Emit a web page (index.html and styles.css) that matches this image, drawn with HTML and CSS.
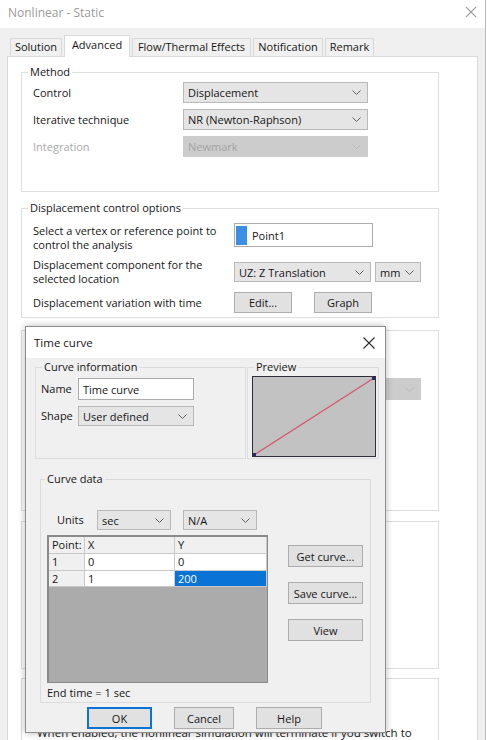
FILE: index.html
```html
<!DOCTYPE html>
<html>
<head>
<meta charset="utf-8">
<link rel="stylesheet" href="styles.css">
</head>
<body>
<div class="window">
  <div class="titlebar">
    <span class="title">Nonlinear - Static</span>
    <svg class="close" width="12" height="12" viewBox="0 0 12 12"><path d="M1 1L11 11M11 1L1 11" stroke="#a0a0a0" stroke-width="1.1" fill="none"/></svg>
  </div>
  <div class="main">
    <div class="tabs">
      <div class="tab t-solution">Solution</div>
      <div class="tab active t-adv">Advanced</div>
      <div class="tab t-flow">Flow/Thermal Effects</div>
      <div class="tab t-notif">Notification</div>
      <div class="tab t-remark">Remark</div>
    </div>
    <div class="panel">
      <fieldset class="group g-method">
        <legend>Method</legend>
        <div class="rows-method">
          <div class="lbl">Control</div>
          <div class="select w185"><span>Displacement</span><svg class="chev" width="9" height="5" viewBox="0 0 9 5"><path d="M0.5 0.5L4.5 4.5L8.5 0.5" stroke="#606060" fill="none"/></svg></div>
          <div class="lbl">Iterative technique</div>
          <div class="select w185"><span>NR (Newton-Raphson)</span><svg class="chev" width="9" height="5" viewBox="0 0 9 5"><path d="M0.5 0.5L4.5 4.5L8.5 0.5" stroke="#606060" fill="none"/></svg></div>
          <div class="lbl disabled-text">Integration</div>
          <div class="select w185 disabled"><span>Newmark</span><svg class="chev" width="9" height="5" viewBox="0 0 9 5"><path d="M0.5 0.5L4.5 4.5L8.5 0.5" stroke="#b8b8b8" fill="none"/></svg></div>
        </div>
      </fieldset>

      <fieldset class="group g-disp">
        <legend>Displacement control options</legend>
        <div class="rows-disp">
          <div class="lbl two r1">Select a vertex or reference point to<br>control the analysis</div>
          <div class="input point"><span class="pick"></span><span>Point1</span></div>
          <div class="lbl two">Displacement component for the<br>selected location</div>
          <div class="pair">
            <div class="select w137"><span>UZ: Z Translation</span><svg class="chev" width="9" height="5" viewBox="0 0 9 5"><path d="M0.5 0.5L4.5 4.5L8.5 0.5" stroke="#606060" fill="none"/></svg></div>
            <div class="select w46"><span>mm</span><svg class="chev" width="9" height="5" viewBox="0 0 9 5"><path d="M0.5 0.5L4.5 4.5L8.5 0.5" stroke="#606060" fill="none"/></svg></div>
          </div>
          <div class="lbl">Displacement variation with time</div>
          <div class="pair btns">
            <div class="btn w58">Edit...</div>
            <div class="btn w58">Graph</div>
          </div>
        </div>
      </fieldset>

      <fieldset class="group g-three">
        <div class="rows-three">
          <div class="select w187 disabled"><span>Newton-Raphson</span><svg class="chev" width="9" height="5" viewBox="0 0 9 5"><path d="M0.5 0.5L4.5 4.5L8.5 0.5" stroke="#b8b8b8" fill="none"/></svg></div>
        </div>
      </fieldset>

      <fieldset class="group g-four"></fieldset>

      <fieldset class="group g-five">
        <div class="note">When enabled, the nonlinear simulation will terminate if you switch to</div>
      </fieldset>
    </div>
  </div>

  <div class="dialog">
    <div class="dlg-title">
      <span>Time curve</span>
      <svg width="12" height="12" viewBox="0 0 12 12"><path d="M0.5 0.5L11.5 11.5M11.5 0.5L0.5 11.5" stroke="#2b2b2b" stroke-width="1.1" fill="none"/></svg>
    </div>
    <div class="dlg-body">
      <div class="top-row">
        <fieldset class="dgroup g-info">
          <legend>Curve information</legend>
          <div class="rows-info">
            <div class="lbl">Name</div>
            <div class="input w116"><span>Time curve</span></div>
            <div class="lbl">Shape</div>
            <div class="select w116 sh20"><span>User defined</span><svg class="chev" width="9" height="5" viewBox="0 0 9 5"><path d="M0.5 0.5L4.5 4.5L8.5 0.5" stroke="#606060" fill="none"/></svg></div>
          </div>
        </fieldset>
        <fieldset class="dgroup g-preview">
          <legend>Preview</legend>
          <div class="preview">
            <svg width="122" height="79" viewBox="0 0 122 79">
              <line x1="1" y1="78" x2="121" y2="1" stroke="#d6546e" stroke-width="1.2"/>
              <rect x="0" y="76" width="3" height="3" fill="#2a2a6a"/>
              <rect x="119" y="0" width="3" height="3" fill="#2a2a6a"/>
            </svg>
          </div>
        </fieldset>
      </div>

      <fieldset class="dgroup g-data">
        <legend>Curve data</legend>
        <div class="units">
          <div class="lbl units-lbl">Units</div>
          <div class="select w74 sh20"><span>sec</span><svg class="chev" width="9" height="5" viewBox="0 0 9 5"><path d="M0.5 0.5L4.5 4.5L8.5 0.5" stroke="#606060" fill="none"/></svg></div>
          <div class="select w74 sh20"><span>N/A</span><svg class="chev" width="9" height="5" viewBox="0 0 9 5"><path d="M0.5 0.5L4.5 4.5L8.5 0.5" stroke="#606060" fill="none"/></svg></div>
        </div>
        <div class="data-row">
          <div class="table">
            <div class="cell head">Point:</div><div class="cell head">X</div><div class="cell head">Y</div>
            <div class="cell rowhead">1</div><div class="cell">0</div><div class="cell">0</div>
            <div class="cell rowhead">2</div><div class="cell">1</div><div class="cell sel">200</div>
          </div>
          <div class="side-btns">
            <div class="btn w75">Get curve...</div>
            <div class="btn w75">Save curve...</div>
            <div class="btn w75">View</div>
          </div>
        </div>
        <div class="endtime">End time = 1 sec</div>
      </fieldset>

      <div class="dlg-btns">
        <div class="btn ok">OK</div>
        <div class="btn cancel">Cancel</div>
        <div class="btn help">Help</div>
      </div>
    </div>
  </div>
</div>
</body>
</html>
```

FILE: styles.css
```css
* { box-sizing: border-box; }
html, body { margin: 0; padding: 0; }
body {
  width: 487px;
  height: 740px;
  overflow: hidden;
  background: #ffffff;
  font-family: "Open Sans", "Noto Sans", sans-serif;
  font-size: 11px;
  color: #161616;
}
.window {
  position: relative;
  width: 486px;
  height: 740px;
  border-right: 1px solid #b9b9b9;
  background: #f0f0f0;
  overflow: hidden;
}
.titlebar {
  height: 28px;
  background: #ffffff;
  display: flex;
  justify-content: space-between;
  align-items: flex-start;
  padding: 5px 8px 0 8px;
}
.title { color: #9c9c9c; font-size: 12px; line-height: 15px; }
.close { margin-top: 1px; }

.main { padding: 7px 7px 0 7px; }
.tabs {
  display: flex;
  align-items: flex-end;
  height: 21px;
  padding-left: 3px;
  gap: 2px;
}
.tab {
  height: 18px;
  line-height: 16px;
  text-align: center;
  border: 1px solid #d9d9d9;
  border-bottom: none;
  background: #f0f0f0;
  white-space: nowrap;
}
.t-solution { width: 52px; }
.t-adv { width: 66px; }
.t-flow { width: 119px; }
.t-notif { width: 70px; }
.t-remark { width: 49px; }
.tab.active {
  height: 22px;
  line-height: 17px;
  background: #ffffff;
  margin-bottom: -1px;
  position: relative;
  z-index: 1;
}

.panel {
  background: #ffffff;
  border: 1px solid #d9d9d9;
  height: 700px;
  padding: 7px 0 0 13px;
}

fieldset { margin: 0; min-width: 0; }
.group {
  width: 418px;
  border: 1px solid #dedede;
  padding: 0 0 0 11px;
}
legend {
  padding: 0 2px;
  line-height: 16px;
  margin-left: -5px;
}
.lbl { line-height: 14px; white-space: nowrap; }
.disabled-text { color: #a8a8a8; }

.select {
  height: 21px;
  background: #e5e5e5;
  border: 1px solid #b9b9b9;
  display: flex;
  align-items: center;
  justify-content: space-between;
  padding: 0 6px 0 4px;
  white-space: nowrap;
  overflow: hidden;
}
.select.disabled { background: #cccccc; border-color: #cccccc; color: #a3a3a3; }
.select.sh20 { height: 20px; }
.chev { flex: none; }
.w185 { width: 185px; }
.w187 { width: 187px; }
.w137 { width: 137px; }
.w46 { width: 46px; }
.w58 { width: 58px; }
.w74 { width: 74px; }
.w75 { width: 75px; }
.w116 { width: 116px; }

.input {
  background: #ffffff;
  border: 1px solid #acacac;
  display: flex;
  align-items: center;
  padding: 0 4px;
  white-space: nowrap;
}
.btn {
  height: 22px;
  background: #e1e1e1;
  border: 1px solid #adadad;
  display: flex;
  align-items: center;
  justify-content: center;
  white-space: nowrap;
}

/* Method */
.g-method { padding-top: 2px; padding-bottom: 34px; margin-bottom: 8px; }
.rows-method {
  display: grid;
  grid-template-columns: 150px 185px;
  row-gap: 6px;
  align-items: center;
}

/* Displacement */
.g-disp { padding-top: 7px; padding-bottom: 4px; margin-bottom: 12px; }
.rows-disp {
  display: grid;
  grid-template-columns: 201px auto;
  align-items: center;
  row-gap: 6px;
}
.rows-disp .r1 { align-self: start; margin-top: 1px; }
.point { width: 139px; height: 24px; align-self: start; padding-left: 1px; }
.pick { width: 11px; height: 19px; background: #3d8fe6; margin-right: 5px; }
.pair { display: flex; gap: 4px; }
.pair .select { height: 20px; }
.btns { gap: 22px; }
.btns .btn { height: 21px; }

.g-three { height: 181px; padding-top: 47px; margin-bottom: 10px; }
.rows-three { padding-left: 201px; }
.rows-three .select { height: 22px; }
.g-four { height: 148px; margin-bottom: 9px; }
.g-five { height: 80px; padding: 46px 0 0 15px; }
.note { line-height: 16px; font-size: 11.5px; white-space: nowrap; }

/* Dialog */
.dialog {
  position: absolute;
  left: 25px;
  top: 326px;
  width: 361px;
  height: 407px;
  border: 1px solid #8e8e8e;
  background: #f0f0f0;
  box-shadow: 0 0 7px rgba(0, 0, 0, 0.28);
  z-index: 5;
}
.dlg-title {
  height: 31px;
  background: #ffffff;
  display: flex;
  align-items: center;
  justify-content: space-between;
  padding: 0 10px 0 8px;
  font-size: 11.5px;
}
.dlg-body { padding: 1px 0 0 9px; }
.top-row { display: flex; gap: 1px; }
.dgroup { border: 1px solid #dcdcdc; }
.g-info { width: 211px; padding: 3px 0 30px 5px; }
.g-info legend { margin-left: 1px; }
.rows-info {
  display: grid;
  grid-template-columns: 37px 116px;
  row-gap: 6px;
  align-items: center;
}
.rows-info .input { height: 22px; }
.g-preview { width: 132px; padding: 1px 2px 1px 4px; }
.g-preview legend { margin-left: 2px; }
.preview {
  width: 124px;
  height: 81px;
  border: 1px solid #2e2e3a;
  background: #c2c2c2;
}
.preview svg { display: block; }

.g-data {
  width: 331px;
  margin: 12px 0 4px 5px;
  padding: 23px 0 1px 6px;
}
.g-data legend { margin-left: -2px; }
.units { display: flex; align-items: center; gap: 12px; }
.units-lbl { width: 38px; padding-left: 10px; }
.data-row { display: flex; margin-top: 5px; }
.table {
  width: 221px;
  height: 148px;
  background: #ababab;
  border: 1px solid #8a8a8a;
  border-width: 2px 1px 1px 2px;
  display: grid;
  grid-template-columns: 36px 90px 92px;
  grid-template-rows: 17px 17px 16px;
  align-content: start;
}
.cell {
  background: #ffffff;
  border-right: 1px solid #c8c8c8;
  border-bottom: 1px solid #c8c8c8;
  padding-left: 3px;
  line-height: 16px;
}
.cell.head, .cell.rowhead { background: #f0f0f0; }
.cell.sel { background: #0a74d6; color: #ffffff; }
.side-btns {
  display: flex;
  flex-direction: column;
  gap: 15px;
  margin: 10px 0 0 20px;
}
.endtime { line-height: 16px; margin-top: 2px; }

.dlg-btns { display: flex; gap: 22px; padding-left: 52px; }
.dlg-btns .btn { height: 22px; }
.ok { width: 65px; border: 2px solid #0a74d6; }
.cancel { width: 60px; }
.help { width: 66px; }
```
